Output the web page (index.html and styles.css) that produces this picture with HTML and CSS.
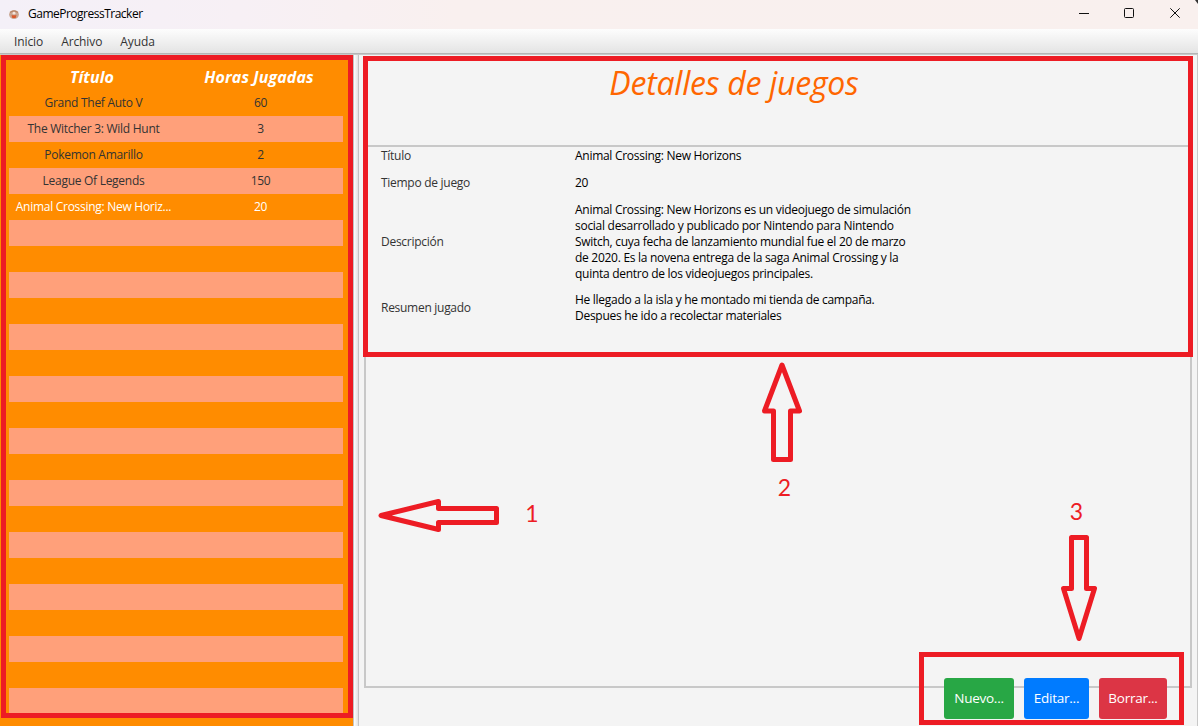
FILE: index.html
```html
<!DOCTYPE html>
<html lang="es">
<head>
<meta charset="utf-8">
<title>GameProgressTracker</title>
<link rel="stylesheet" href="styles.css">
</head>
<body>
<div class="window">
  <header class="titlebar">
    <svg class="app-icon" width="12" height="12" viewBox="0 0 12 12">
      <ellipse cx="6" cy="5.6" rx="4.9" ry="4.3" fill="#c9a692"/>
      <path d="M2 3.5 Q6 .5 10 3.5" fill="none" stroke="#b98668" stroke-width="1.4"/>
      <circle cx="6" cy="4.2" r="1.4" fill="#f5e4da"/>
      <path d="M3.5 6.2h5L7.6 9H4.4z" fill="#d9592c"/>
    </svg>
    <span class="app-name">GameProgressTracker</span>
    <svg class="controls" width="114" height="29" viewBox="0 0 114 29" fill="none" stroke="#111">
      <path d="M0 13.5h10"/>
      <rect x="45.5" y="8.5" width="9" height="9" rx="1"/>
      <path d="M91.3 8.3l9.4 9.4M100.7 8.3l-9.4 9.4"/>
    </svg>
  </header>
  <nav class="menubar"><span>Inicio</span><span>Archivo</span><span>Ayuda</span></nav>
  <main class="content">
    <aside class="sidebar">
      <div class="table">
        <div class="row head"><span>Título</span><span>Horas Jugadas</span></div>
        <div class="row"><span>Grand Thef Auto V</span><span>60</span></div>
        <div class="row"><span>The Witcher 3: Wild Hunt</span><span>3</span></div>
        <div class="row"><span>Pokemon Amarillo</span><span>2</span></div>
        <div class="row"><span>League Of Legends</span><span>150</span></div>
        <div class="row selected"><span>Animal Crossing: New Horiz...</span><span>20</span></div>
        <div class="row"></div><div class="row"></div><div class="row"></div><div class="row"></div>
        <div class="row"></div><div class="row"></div><div class="row"></div><div class="row"></div>
        <div class="row"></div><div class="row"></div><div class="row"></div><div class="row"></div>
        <div class="row"></div><div class="row"></div><div class="row"></div><div class="row"></div>
        <div class="row"></div><div class="row"></div><div class="row"></div>
      </div>
    </aside>
    <div class="divider"></div>
    <section class="details">
      <div class="panel">
        <h1>Detalles de juegos</h1>
        <dl class="fields">
          <dt>Título</dt><dd>Animal Crossing: New Horizons</dd>
          <dt>Tiempo de juego</dt><dd>20</dd>
          <dt>Descripción</dt><dd>Animal Crossing: New Horizons es un videojuego de simulación<br>social desarrollado y publicado por Nintendo para Nintendo<br>Switch, cuya fecha de lanzamiento mundial fue el 20 de marzo<br>de 2020. Es la novena entrega de la saga Animal Crossing y la<br>quinta dentro de los videojuegos principales.</dd>
          <dt>Resumen jugado</dt><dd>He llegado a la isla y he montado mi tienda de campaña.<br>Despues he ido a recolectar materiales</dd>
        </dl>
      </div>
      <div class="actions">
        <button class="btn new">Nuevo...</button>
        <button class="btn edit">Editar...</button>
        <button class="btn delete">Borrar...</button>
      </div>
    </section>
  </main>
  <svg class="annotations" width="1198" height="726" viewBox="0 0 1198 726">
    <path d="M1195 0h3v4z" fill="#333"/>
    <g fill="none" stroke="#ed1c24" stroke-width="5">
      <rect x="3.5" y="57.5" width="347" height="658"/>
      <rect x="365.5" y="58.5" width="825" height="296"/>
      <rect x="921.5" y="654.5" width="260" height="68"/>
      <g stroke-linejoin="round">
        <path d="M381 515.5L438.5 501.5V508.5H496.5V522.5H438.5V529.5Z"/>
        <path d="M782 365L799.5 411H790.5V459.5H773.5V411H764.5Z"/>
        <path d="M1079 638.5L1094.5 588.5H1086.5V537.5H1071.5V588.5H1063.5Z"/>
      </g>
    </g>
    <g class="numbers" text-anchor="middle">
      <text x="532" y="522">1</text>
      <text x="784.5" y="496">2</text>
      <text x="1076.5" y="520">3</text>
    </g>
  </svg>
</div>
</body>
</html>
```
FILE: styles.css
```css
* { box-sizing: border-box; }
body {
  margin: 0;
  font-family: "Open Sans", "Noto Sans", sans-serif;
  font-size: 12px;
  letter-spacing: -0.28px;
  color: #333;
}
.window {
  position: relative;
  width: 1198px;
  height: 726px;
  overflow: hidden;
  display: flex;
  flex-direction: column;
  background: #f4f4f4;
}
.titlebar {
  height: 29px;
  flex: none;
  display: flex;
  align-items: center;
  padding-left: 8px;
  background: linear-gradient(90deg, #f4f0f8 0%, #f7f0f5 20%, #f9f0ef 38%, #f9f0ee 100%);
  color: #000;
}
.app-icon { margin-right: 8px; }
.app-name {
  height: 29px;
  line-height: 28px;
  letter-spacing: -0.5px;
}
.controls { margin-left: auto; margin-right: 5px; }
.menubar {
  height: 26px;
  flex: none;
  display: flex;
  gap: 18px;
  padding-left: 14px;
  line-height: 26px;
  letter-spacing: -0.1px;
  background: linear-gradient(#fdfdfd, #e3e3e3);
  border-bottom: 1px solid #c8c8c8;
  box-shadow: inset 0 -1px #b5b5b5;
}
.content { flex: 1; min-height: 0; display: flex; }
.sidebar {
  width: 353px;
  padding: 9px 10px 0 9px;
  background: #ff8c00;
  overflow: hidden;
}
.row {
  height: 26px;
  display: grid;
  grid-template-columns: 169px 165px;
  line-height: 26px;
  text-align: center;
  white-space: nowrap;
}
.row:nth-child(odd) { background: #ffa07a; }
.row.head {
  grid-template-columns: 166px 168px;
  background: none;
  color: #fff;
  font-size: 16px;
  letter-spacing: 0.1px;
  font-weight: 700;
  font-style: italic;
}
.row.selected { color: #fff; }
.divider {
  width: 6px;
  border: 1px solid #c3c3c3;
  border-width: 0 1px;
  background: linear-gradient(90deg, #fff, #e2e2e2);
}
.details {
  flex: 1;
  display: flex;
  flex-direction: column;
  padding: 1px 5px 0;
  border-right: 1px solid #c8c8c8;
}
.panel {
  height: 632px;
  flex: none;
  border: 2px solid #c8c8c8;
}
h1 {
  height: 89px;
  margin: 0;
  padding-right: 88px;
  border-bottom: 2px solid #c8c8c8;
  text-align: center;
  font-size: 32px;
  letter-spacing: -0.25px;
  font-weight: 400;
  font-style: italic;
  line-height: 50px;
  color: #ff6600;
}
.fields {
  margin: 0;
  padding: 1px 0 0 15px;
  display: grid;
  grid-template-columns: 194px 1fr;
  grid-template-rows: 16px 18px 80px 32px;
  row-gap: 10px;
  align-items: center;
  line-height: 16px;
}
dd { margin: 0; color: #000; white-space: nowrap; }
.actions {
  display: flex;
  justify-content: flex-end;
  gap: 10px;
  margin-top: -10px;
  padding-right: 25px;
}
.btn {
  height: 41px;
  padding: 0 0 2px;
  border: 0;
  border-radius: 3px;
  color: #fff;
  font: 13.5px "Open Sans", sans-serif;
  letter-spacing: -0.25px;
}
.new { width: 70px; background: #28a745; }
.edit { width: 65px; background: #007bff; }
.delete { width: 68px; background: #dc3545; }
.annotations { position: absolute; left: 0; top: 0; }
.numbers {
  fill: #ed1c24;
  font-family: Lato, sans-serif;
  font-size: 23px;
  letter-spacing: 0;
}
```
